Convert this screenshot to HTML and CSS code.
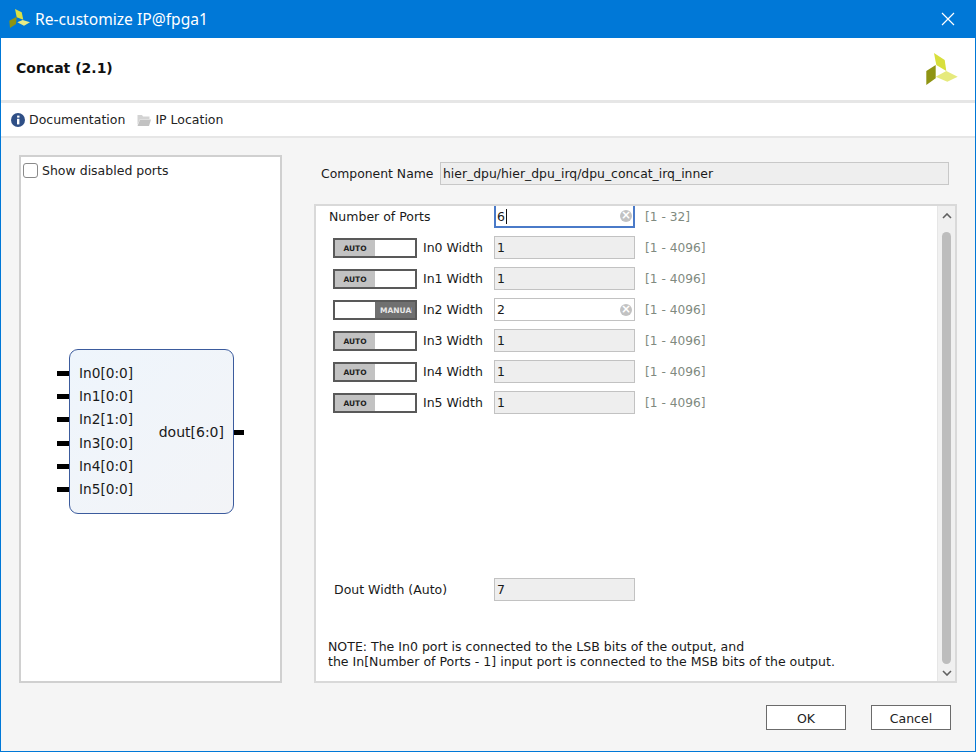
FILE: index.html
```html
<!DOCTYPE html>
<html lang="en">
<head>
<meta charset="utf-8">
<title>Re-customize IP@fpga1</title>
<link rel="stylesheet" href="styles.css">
</head>
<body>
<div class="window">
  <header class="titlebar">
    <svg class="title-logo" width="24" height="24" viewBox="0 0 24 24">
      <polygon points="6,1 12.7,4.3 14.3,11.7 7.7,9.3" fill="#d9e045"/>
      <polygon points="0.3,12.7 7.7,8.7 7,16 1,20" fill="#8f9413"/>
      <polygon points="8.3,14.3 13.7,12 21,14.3 15,17.7" fill="#e8ec85"/>
    </svg>
    <span class="title-text">Re-customize IP@fpga1</span>
    <svg class="close" width="14" height="14" viewBox="0 0 14 14">
      <path d="M1 1 L13 13 M13 1 L1 13" stroke="#fff" stroke-width="1.2" fill="none"/>
    </svg>
  </header>
  <section class="heading">
    <h1 class="ip-name">Concat (2.1)</h1>
    <svg class="brand" width="34" height="34" viewBox="0 0 34 34">
      <polygon points="9,1 19.7,8 21.3,19 11.3,13" fill="#d8df3c"/>
      <polygon points="1.3,19 10.7,13 10.7,26.3 1.3,33" fill="#8f9413"/>
      <polygon points="10.7,24.7 21.3,19 32.7,24.7 22.3,29.7" fill="#e6ea7d"/>
    </svg>
  </section>
  <nav class="toolbar">
    <a class="tool">
      <svg width="14" height="14" viewBox="0 0 14 14">
        <circle cx="7" cy="7" r="7" fill="#2f4f86"/>
        <rect x="6" y="5.8" width="2.4" height="5.6" fill="#fff"/>
        <rect x="6.1" y="2.6" width="2.4" height="2" fill="#fff"/>
      </svg>
      Documentation
    </a>
    <a class="tool">
      <svg width="14" height="14" viewBox="0 0 14 14">
        <path d="M0.5 2 H5 L6 3.5 H12.5 V6 H3 L0.5 12 Z" fill="#d3d3d3"/>
        <path d="M3 6.5 H14 L12 13 H0.5 Z" fill="#c2c2c2"/>
      </svg>
      IP Location
    </a>
  </nav>
  <main class="body">
    <aside class="symbol-panel">
      <label class="check"><span class="box"></span>Show disabled ports</label>
      <div class="symbol-stage">
        <div class="block">
          <ul class="ports">
            <li class="port">In0[0:0]</li>
            <li class="port">In1[0:0]</li>
            <li class="port">In2[1:0]</li>
            <li class="port">In3[0:0]</li>
            <li class="port">In4[0:0]</li>
            <li class="port">In5[0:0]</li>
          </ul>
          <div class="port-out">dout[6:0]</div>
        </div>
      </div>
    </aside>
    <section class="config">
      <div class="component">
        <span class="component-label">Component Name</span>
        <div class="field field-wide">hier_dpu/hier_dpu_irq/dpu_concat_irq_inner</div>
      </div>
      <div class="form-panel">
        <div class="form">
          <div class="row row-first">
            <span class="row-label label-ports">Number of Ports</span>
            <div class="input focus"><span class="value">6</span><span class="caret"></span><span class="clear">×</span></div>
            <span class="range">[1 - 32]</span>
          </div>
          <div class="row">
            <div class="toggle"><span class="t-on">AUTO</span><span class="t-blank"></span></div>
            <span class="row-label">In0 Width</span>
            <div class="input off">1</div>
            <span class="range">[1 - 4096]</span>
          </div>
          <div class="row">
            <div class="toggle"><span class="t-on">AUTO</span><span class="t-blank"></span></div>
            <span class="row-label">In1 Width</span>
            <div class="input off">1</div>
            <span class="range">[1 - 4096]</span>
          </div>
          <div class="row">
            <div class="toggle"><span class="t-blank"></span><span class="t-manual">MANUAL</span></div>
            <span class="row-label">In2 Width</span>
            <div class="input"><span class="value">2</span><span class="clear">×</span></div>
            <span class="range">[1 - 4096]</span>
          </div>
          <div class="row">
            <div class="toggle"><span class="t-on">AUTO</span><span class="t-blank"></span></div>
            <span class="row-label">In3 Width</span>
            <div class="input off">1</div>
            <span class="range">[1 - 4096]</span>
          </div>
          <div class="row">
            <div class="toggle"><span class="t-on">AUTO</span><span class="t-blank"></span></div>
            <span class="row-label">In4 Width</span>
            <div class="input off">1</div>
            <span class="range">[1 - 4096]</span>
          </div>
          <div class="row">
            <div class="toggle"><span class="t-on">AUTO</span><span class="t-blank"></span></div>
            <span class="row-label">In5 Width</span>
            <div class="input off">1</div>
            <span class="range">[1 - 4096]</span>
          </div>
          <div class="row row-dout">
            <span class="row-label label-dout">Dout Width (Auto)</span>
            <div class="input off">7</div>
          </div>
          <p class="note">NOTE: The In0 port is connected to the LSB bits of the output, and<br>the In[Number of Ports - 1] input port is connected to the MSB bits of the output.</p>
        </div>
        <div class="scrollbar">
          <svg width="10" height="6" viewBox="0 0 10 6"><path d="M1 5 L5 1 L9 5" stroke="#606060" stroke-width="1.6" fill="none"/></svg>
          <div class="track"><div class="thumb"></div></div>
          <svg width="10" height="6" viewBox="0 0 10 6"><path d="M1 1 L5 5 L9 1" stroke="#606060" stroke-width="1.6" fill="none"/></svg>
        </div>
      </div>
    </section>
  </main>
  <footer class="actions">
    <button class="btn">OK</button>
    <button class="btn">Cancel</button>
  </footer>
</div>
</body>
</html>
```
FILE: styles.css
```css
* { box-sizing: border-box; }
html, body { margin: 0; padding: 0; }
body { width: 976px; height: 752px; overflow: hidden; font-family: "DejaVu Sans", sans-serif; font-size: 12px; color: #1a1a1a; }
.window { width: 976px; height: 752px; display: flex; flex-direction: column; background: #f5f5f5; border: 1px solid #0078d7; border-top: 0; }
.titlebar { height: 38px; flex: none; margin: 0 -1px; background: #0078d7; display: flex; align-items: center; color: #fff; padding: 0 21px 0 9px; }
.title-logo { flex: none; margin-top: 1px; }
.title-text { font-family: "Noto Sans", sans-serif; font-size: 15.6px; margin-left: 2px; flex: 1; }
.heading { height: 62px; flex: none; background: #fff; display: flex; align-items: center; justify-content: space-between; padding: 0 16px 0 15px; }
.ip-name { margin: 0 0 2px; font-size: 14px; font-weight: 700; color: #111; }
.brand { margin-top: -1px; }
.toolbar { height: 38px; flex: none; background: #fff; border-top: 3px solid #e6e6e6; border-bottom: 2px solid #e6e6e6; display: flex; align-items: center; padding-left: 10px; gap: 12px; font-size: 12.5px; }
.tool { display: flex; align-items: center; gap: 4px; color: #222; }
.body { flex: 1; display: flex; padding: 17px 0 0 18px; min-height: 0; }
.symbol-panel { width: 263px; height: 528px; flex: none; background: #fff; border: 2px solid #d0d0d0; display: flex; flex-direction: column; padding: 4px 0 0 2px; }
.check { display: flex; align-items: center; gap: 4px; font-size: 12.5px; color: #222; height: 18px; }
.box { width: 15px; height: 15px; border: 1.5px solid #8a8a8a; border-radius: 3px; background: #fff; }
.symbol-stage { flex: 1; padding: 170px 0 0 46px; }
.block { width: 165px; height: 165px; border: 1px solid #3b5b9d; border-radius: 9px; background: linear-gradient(135deg, #eef5fc, #f3f4f7); display: flex; justify-content: space-between; align-items: center; position: relative; padding: 0 9px 0 9px; }
.ports { list-style: none; margin: 0; padding: 0; display: flex; flex-direction: column; gap: 6.4px; }
.port { height: 17px; line-height: 17px; position: relative; font-size: 13.7px; }
.port::before { content: ""; position: absolute; left: -22px; top: 6px; width: 12px; height: 5px; background: #000; }
.port-out { position: relative; font-size: 14px; margin-top: 0; }
.port-out::after { content: ""; position: absolute; right: -20px; top: 6px; width: 10px; height: 5px; background: #000; }
.config { flex: 1; display: flex; flex-direction: column; padding-left: 32px; min-width: 0; }
.component { height: 49px; flex: none; display: flex; align-items: flex-start; padding-top: 7px; }
.component-label { width: 126px; flex: none; padding-left: 7px; font-size: 12.4px; line-height: 23px; white-space: nowrap; }
.field { background: #eee; border: 1px solid #c8c8c8; height: 23px; line-height: 21px; padding-left: 2px; font-size: 12.4px; }
.field-wide { width: 509px; }
.form-panel { width: 643px; height: 479px; background: #fff; border: 2px solid #d9d9d9; display: flex; overflow: hidden; }
.form { flex: 1; display: flex; flex-direction: column; padding-left: 17px; min-width: 0; position: relative; }
.row { height: 23px; flex: none; margin-top: 8px; display: flex; align-items: center; }
.row-first { height: 24px; margin-top: -2px; }
.row-first .input { height: 24px; }
.row-first .range { padding-top: 1px; }
.row-label { font-size: 12.5px; width: 77px; padding-left: 6px; white-space: nowrap; }
.label-ports { width: 165px; padding-left: 0; margin-left: -4px; flex: none; }
.label-dout { width: 165px; margin-left: -4px; padding-left: 5px; flex: none; }
.row-dout { margin-top: 164px; }
.toggle { width: 84px; height: 20px; flex: none; display: flex; border: 2px solid #595959; background: #fff; overflow: hidden; }
.t-on { width: 40px; background: #c2c2c2; text-align: center; font-size: 7.5px; font-weight: 700; line-height: 17px; color: #222; }
.t-blank { width: 40px; flex: none; background: #fff; }
.t-manual { width: 40px; flex: none; padding-left: 5px; background: #707070; border-right: 3px solid #707070; color: #e8e8e8; font-size: 7.5px; font-weight: 700; line-height: 17px; white-space: nowrap; overflow: hidden; }
.input { width: 141px; height: 23px; flex: none; border: 1px solid #c2c2c2; background: #fff; display: flex; align-items: center; padding: 0 2px; font-size: 12.5px; position: relative; }
.input.off { background: #eee; }
.input.focus { border: 2px solid #4a7ac8; padding-left: 1px; }
.value { flex: none; }
.caret { width: 1px; height: 15px; background: #111; margin-left: 1px; }
.clear { position: absolute; right: 2px; top: 5px; width: 12px; height: 12px; border-radius: 50%; background: #c2c2c2; color: #fff; font-size: 12px; line-height: 11px; text-align: center; font-weight: 700; }
.row-first .clear { right: 1px; top: 4px; }
.range { margin-left: 10px; font-size: 12.2px; color: #7f8a80; white-space: nowrap; }
.note { margin: 38px 0 0 -5px; font-size: 12.54px; line-height: 15px; color: #1a1a1a; white-space: nowrap; }
.scrollbar { width: 18px; flex: none; background: #f0f0f0; border-left: 1px solid #e6e6e6; display: flex; flex-direction: column; align-items: center; padding: 7px 0 5px; }
.track { flex: 1; width: 100%; padding: 13px 0 6px; display: flex; justify-content: center; }
.thumb { width: 9px; height: 100%; background: #bdbdbd; border-radius: 5px; }
.actions { height: 68px; flex: none; display: flex; justify-content: flex-end; gap: 25px; padding: 22px 24px 0 0; }
.btn { width: 80px; height: 25px; background: #fff; border: 1px solid #6b6b6b; border-radius: 0; font-family: "DejaVu Sans", sans-serif; font-size: 12.5px; color: #222; padding: 1px 0 0; }
```
